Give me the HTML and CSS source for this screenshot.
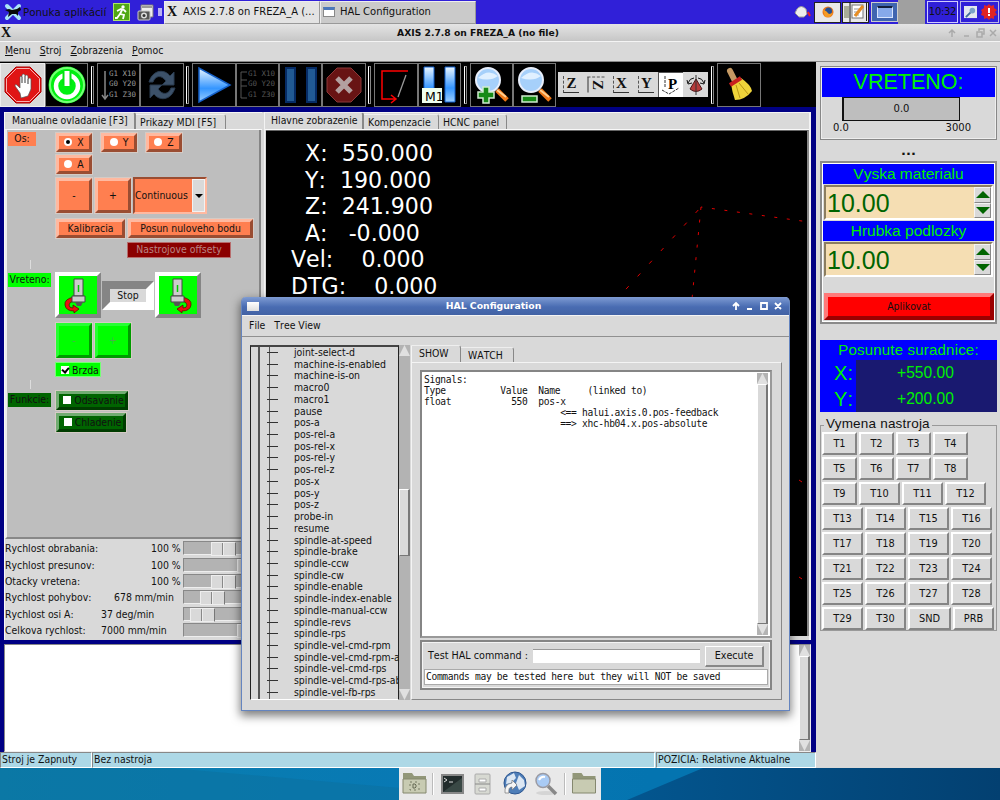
FILE: index.html
```html
<!DOCTYPE html>
<html lang="sk">
  <head>
    <meta charset="UTF-8" />
    <title>AXIS 2.7.8 on FREZA_A (no file)</title>
    <link rel="stylesheet" href="styles.css">
  </head>
  <body>
    <header class="taskbar">
      <svg class="mouse" width="18" height="18" viewBox="0 0 18 18">
        <path d="M3 3l12 12M15 3L3 15" stroke="#a9e4f7" stroke-width="4" stroke-linecap="round" />
        <path d="M1 7l4-1 3 1 5-1 3-2 1 3-3 2v4l-2-2H8l-4 3 1-5z" fill="#080808" />
      </svg>
      <span class="apps">Ponuka aplikácií</span>
      <svg class="exit" width="17" height="18" viewBox="0 0 17 18">
        <rect x=".5" y=".5" width="16" height="17" fill="#50a814" stroke="#aee46b" />
        <circle cx="10" cy="4" r="1.7" fill="#fff" />
        <path d="M4 8l4-2 3 1 2 2M9 7l-2 4 4 1-1 4M7 11l-3 4H2" stroke="#fff" stroke-width="1.8" fill="none" />
      </svg>
      <svg class="camera" width="17" height="17" viewBox="0 0 17 17">
        <path d="M4 1h12v12H4z" fill="#eee" stroke="#777" />
        <path d="M5 3h10" stroke="#999" stroke-width="2" />
        <rect x="1" y="7" width="12" height="9" rx="1" fill="#555" stroke="#ccc" />
        <circle cx="7" cy="11.500" r="3" fill="#ddd" /><circle cx="7" cy="11.500" r="1.500" fill="#333" />
      </svg>
      <i class="handle"></i>
      <div class="task active"><b class="xlogo">X</b><span>AXIS 2.7.8 on FREZA_A (...</span></div>
      <div class="task"><i class="win-icon"></i><span>HAL Configuration</span></div>
      <div class="tray">
        <svg width="17" height="14" viewBox="0 0 17 14">
          <path d="M1 8l2-4q4-5 9 0l1 5-3 3H5z" fill="#eee" stroke="#999" /><path d="M14 7l2 4" stroke="#e22" stroke-width="2" />
        </svg>
        <span class="pager fox">
          <svg width="12" height="12" viewBox="0 0 12 12"><circle cx="6" cy="6" r="5.500" fill="#e8761c" /><circle cx="6.500" cy="5" r="3.500" fill="#254f91" /><path d="M1 4l3 1 3 3 4-1-3 4H3z" fill="#f59a22" /></svg>
        </span>
        <span class="pager edit">
          <svg width="24" height="20" viewBox="0 0 24 20"><path d="M0 4h5v12H0z" fill="#a8ab98" /><path d="M6 0v20" stroke="#111" /><rect x="8" y="3" width="11" height="13" fill="#fff" stroke="#777" /><path d="M10 7h7M10 10h6M10 13h5" stroke="#999" /><path d="M11 14l8-10" stroke="#e88e23" stroke-width="3" /><path d="M22.500 1v18" stroke="#222" /></svg>
        </span>
        <span class="desk on"><i></i></span>
        <span class="desk"></span>
        <span class="clock">10:32</span>
        <span class="status-icons">
          <svg width="13" height="13" viewBox="0 0 14 14"><rect width="14" height="13" fill="#e3e8ef" /><path d="M2 12l7-7" stroke="#3f6c99" stroke-width="2" /><circle cx="9" cy="5" r="3" fill="#7aa2c8" /></svg>
          <svg width="16" height="16" viewBox="0 0 16 16"><path d="M8 0l2 2 3-1v3l3 2-2 2 2 3-3 1v3l-3-1-2 2-2-2-3 1v-3l-3-1 1-3-1-2 3-2V1l3 1z" fill="#e02424" /><path d="M8 4v5M8 10v2" stroke="#fff" stroke-width="2" /></svg>
        </span>
      </div>
    </header>

    <div class="titlebar">
      <b class="xlogo">X</b>
      <h1>AXIS 2.7.8 on FREZA_A (no file)</h1>
      <svg width="50" height="10" viewBox="0 0 50 10" fill="none" stroke="#aaa" stroke-width="1.500">
        <path d="M5 9V2M2 5l3-3 3 3M17 8h5M30 4h5v5h-5zM32 3V1h5v5h-2M43 2l6 6M49 2l-6 6" />
      </svg>
    </div>
    <nav class="menubar">
      <span><u>M</u>enu</span><span><u>S</u>troj</span><span><u>Z</u>obrazenia</span><span><u>P</u>omoc</span>
    </nav>

    <main>
      <section class="axis">
        <div class="toolbar">
          <span class="tool lit">
            <svg width="38" height="38" viewBox="0 0 38 38"><path d="M12 1h14l11 11v14L26 37H12L1 26V12z" fill="#e01515" stroke="#a00" /><path d="M12.500 2.500h13l10 10v13l-10 10h-13l-10-10v-13z" fill="none" stroke="#f9b0b0" /><path d="M16 27l-5-7q0-3 3 0l2 2V11q1-2 2 0v6-8q1-2 3 0v8-7q1-2 3 0v8-5q2-2 3 0v10l-3 7-7 2z" fill="#fff" stroke="#555" stroke-width=".7" /></svg>
          </span>
          <span class="tool">
            <svg width="38" height="38" viewBox="0 0 38 38"><circle cx="19" cy="19" r="18.500" fill="#00f010" /><circle cx="19" cy="19" r="17" fill="none" stroke="#7f7" stroke-width="2" /><circle cx="19" cy="20" r="11" fill="none" stroke="#fff" stroke-width="4.500" /><path d="M19 5v14" stroke="#00e010" stroke-width="9" /><path d="M19 5v15" stroke="#fff" stroke-width="5" /></svg>
          </span>
          <i class="sep"></i>
          <span class="tool">
            <svg width="36" height="34" viewBox="0 0 36 34" class="gcode"><path d="M4 3v28M1 27l3 4 3-4" stroke="#888" fill="none" stroke-width="1.500" /><text x="8" y="8">G1 X10</text><text x="8" y="18">G0 Y20</text><text x="8" y="29">G1 Z30</text></svg>
          </span>
          <span class="tool">
            <svg width="32" height="34" viewBox="0 0 32 34"><path d="M3 14C7 1 19 1 24 8l4-4v13H16l4-4C15 6 9 8 7 14z" fill="#3c5169" stroke="#2a3c50" /><path d="M29 20C25 33 13 33 8 26l-4 4V17h12l-4 4c5 7 11 5 13-1z" fill="#3c5169" stroke="#2a3c50" /></svg>
          </span>
          <i class="sep"></i>
          <span class="tool">
            <svg width="36" height="38" viewBox="0 0 36 38"><defs><linearGradient id="blue" x2="0" y2="1"><stop stop-color="#eaf6ff" /><stop offset=".6" stop-color="#3596ff" /><stop offset="1" stop-color="#9ccfff" /></linearGradient></defs><path d="M3 2v34l31-17z" fill="url(#blue)" stroke="#1560c8" stroke-width="1.500" /></svg>
          </span>
          <span class="tool">
            <svg width="36" height="34" viewBox="0 0 36 34" class="gcode dim"><path d="M8 4H2v26h6M2 12h6M2 18h6" stroke="#555" fill="none" /><text x="9" y="8">G1 X10</text><text x="9" y="18">G0 Y20</text><text x="9" y="29">G1 Z30</text></svg>
          </span>
          <span class="tool">
            <svg width="34" height="38" viewBox="0 0 34 38"><path d="M2 2h9v34H2zM23 2h9v34h-9z" fill="#215a94" stroke="#062c66" stroke-width="2" /></svg>
          </span>
          <span class="tool">
            <svg width="36" height="36" viewBox="0 0 36 36"><path d="M11 1h14l10 10v14L25 35H11L1 25V11z" fill="#681414" stroke="#8b3838" /><path d="M11 11l14 14M25 11L11 25" stroke="#b3a0a0" stroke-width="5" /></svg>
          </span>
          <i class="sep"></i>
          <span class="tool">
            <svg width="38" height="38" viewBox="0 0 38 38" fill="none"><path d="M31 5H5v28h14M14 29l5 4-5 4" stroke="red" stroke-width="1.500" /><path d="M29 9L21 31" stroke="#999" stroke-width="1.300" /></svg>
          </span>
          <span class="tool">
            <svg width="38" height="38" viewBox="0 0 38 38"><path d="M4 1h10v22H4zM25 1h10v35H25z" fill="url(#blue)" stroke="#1060d0" /><path d="M2 22h20v15H2z" fill="#efffef" /><text x="5" y="35" class="m1">M1</text></svg>
          </span>
          <i class="sep"></i>
          <span class="tool">
            <svg width="38" height="38" viewBox="0 0 38 38"><path d="M24 24l10 10" stroke="#f07818" stroke-width="5" /><path d="M24 24l9 7" stroke="#ffd090" stroke-width="2" /><circle cx="15" cy="14" r="12" fill="#a6d0fa" stroke="#e8eefa" stroke-width="2" /><path d="M5 12q10-10 20-2-8 6-20 2" fill="#e0f0ff" /><path d="M10 21h6v5h5v6h-5v5h-6v-5H5v-6h5z" fill="#168a16" stroke="#cfeccf" stroke-width="1.500" /></svg>
          </span>
          <span class="tool">
            <svg width="38" height="38" viewBox="0 0 38 38"><path d="M24 24l10 10" stroke="#f07818" stroke-width="5" /><path d="M24 24l9 7" stroke="#ffd090" stroke-width="2" /><circle cx="15" cy="14" r="12" fill="#a6d0fa" stroke="#e8eefa" stroke-width="2" /><path d="M5 12q10-10 20-2-8 6-20 2" fill="#e0f0ff" /><path d="M6 30h15v6H6z" fill="#168a16" stroke="#cfeccf" stroke-width="1.500" /></svg>
          </span>
          <div class="views">
            <span><b>Z</b></span><span><b class="turned">Z</b></span><span><b>X</b></span><span><b>Y</b></span>
            <span class="down"><svg width="20" height="20" viewBox="0 0 20 20"><path d="M4 1v12M1 15l7 4 10-6" stroke="#333" fill="none" stroke-dasharray="3 1" /><text x="7" y="14" class="persp">P</text></svg></span>
            <span class="spin-view"><svg width="20" height="20" viewBox="0 0 20 20"><path d="M10 4L4 14q6 5 12 0z" fill="#b63a3a" stroke="#501818" /><path d="M10 0v20" stroke="#333" /><path d="M2 8q2-5 6-5M18 8q-2-5-6-5M1 5l1 4 4-1M19 5l-1 4-4-1" stroke="#111" fill="none" /></svg></span>
          </div>
          <i class="sep"></i>
          <span class="tool broom">
            <svg width="36" height="36" viewBox="0 0 36 36"><path d="M9 4l5 10" stroke="#c69a64" stroke-width="6" stroke-linecap="round" /><path d="M10 17l10-6q10 7 11 13-7 9-17 9-3-9-4-16z" fill="#efd43a" /><path d="M15 18l4 13M18 16l9 11" stroke="#b89616" /><path d="M9 18l11-7" stroke="#c82020" stroke-width="4" /></svg>
          </span>
        </div>

        <div class="frame">
          <div class="panes">
            <div class="left-pane">
              <div class="tabs"><span class="tab open">Manualne ovladanie [F3]</span><span class="tab">Prikazy MDI [F5]</span></div>
              <div class="manual">
                <div class="group">
                  <span class="tag coral">Os:</span>
                  <div class="controls">
                    <div class="row axes">
                      <label class="bevel coral"><i class="radio on"></i>X</label>
                      <label class="bevel coral"><i class="radio"></i>Y</label>
                      <label class="bevel coral"><i class="radio"></i>Z</label>
                      <label class="bevel coral"><i class="radio"></i>A</label>
                    </div>
                    <div class="row jog">
                      <span class="bevel coral square">-</span>
                      <span class="bevel coral square">+</span>
                      <span class="combo"><span>Continuous</span><i></i></span>
                    </div>
                    <div class="row home">
                      <span class="bevel coral home-btn">Kalibracia</span>
                      <span class="bevel coral touch-btn">Posun nuloveho bodu</span>
                    </div>
                    <span class="offsets">Nastrojove offsety</span>
                  </div>
                </div>
                <i class="tick"></i>
                <div class="group spindle">
                  <span class="tag lime">Vreteno:</span>
                  <div class="controls">
                    <div class="row turn">
                      <span class="turn-btn">
                        <svg width="38" height="38" viewBox="0 0 38 38"><path d="M15 3h9v17h-9z" fill="#ccc" stroke="#444" /><path d="M19.500 9v7" stroke="#0c0" stroke-width="1.500" /><path d="M15 21q-10 2-9 8 1 6 9 6v2l5-4-6-4v3q-4 0-4-3t5-4z" fill="#e81010" stroke="#500" stroke-width=".7" /><path d="M13 20h13v6H13z" fill="#ccc" stroke="#444" /><path d="M16 26h8l-2 4h-4z" fill="#555" /></svg>
                      </span>
                      <span class="stop"><span>Stop</span></span>
                      <span class="turn-btn flip">
                        <svg width="38" height="38" viewBox="0 0 38 38"><path d="M15 3h9v17h-9z" fill="#ccc" stroke="#444" /><path d="M19.500 9v7" stroke="#0c0" stroke-width="1.500" /><path d="M15 21q-10 2-9 8 1 6 9 6v2l5-4-6-4v3q-4 0-4-3t5-4z" fill="#e81010" stroke="#500" stroke-width=".7" /><path d="M13 20h13v6H13z" fill="#ccc" stroke="#444" /><path d="M16 26h8l-2 4h-4z" fill="#555" /></svg>
                      </span>
                    </div>
                    <div class="row speed"><span class="bevel lime square">-</span><span class="bevel lime square">+</span></div>
                    <label class="brake"><i class="check on"></i>Brzda</label>
                  </div>
                </div>
                <i class="tick low"></i>
                <div class="group">
                  <span class="tag forest">Funkcie:</span>
                  <div class="controls coolant">
                    <label class="bevel forest"><i class="check"></i>Odsavanie</label>
                    <label class="bevel forest short"><i class="check"></i>Chladenie</label>
                  </div>
                </div>
              </div>
              <div class="sliders">
                <div><label>Rychlost obrabania:</label><span class="pct">100 %</span><i class="s1"></i></div>
                <div><label>Rychlost presunov:</label><span class="pct">100 %</span><i class="s2"></i></div>
                <div><label>Otacky vretena:</label><span class="pct">100 %</span><i class="s1"></i></div>
                <div><label>Rychlost pohybov:</label><span class="v4">678 mm/min</span><i class="s4"></i></div>
                <div><label>Rychlost osi A:</label><span class="v5">37 deg/min</span><i class="s5"></i></div>
                <div><label>Celkova rychlost:</label><span class="v6">7000 mm/min</span><i class="s2"></i></div>
              </div>
            </div>
            <div class="right-pane">
              <div class="tabs"><span class="tab open">Hlavne zobrazenie</span><span class="tab">Kompenzacie</span><span class="tab">HCNC panel</span></div>
              <div class="preview">
                <pre class="dro"><span class="d1">X:  550.000</span>
<span class="d1">Y:  190.000</span>
<span class="d1">Z:  241.900</span>
<span class="d1">A:   -0.000</span>
<span class="d2">Vel:    0.000</span>
<span class="d2">DTG:    0.000</span></pre>
                <svg class="limits" width="190" height="500" viewBox="0 0 190 500">
                  <path d="M82 76L-2 168" stroke-dasharray="4 13.2" stroke-dashoffset="-4" />
                  <path d="M82 76l-9 92" stroke-dasharray="3 9.600" />
                  <path d="M82 76l108 15" stroke-dasharray="3 9.600" stroke-dashoffset="-11" />
                  <path d="M180 349l3 2M180 446l3 2" />
                </svg>
              </div>
            </div>
          </div>
          <div class="gcode-text"><div class="scroll"><i class="up"></i><i class="bar"></i><i class="dn"></i></div></div>
        </div>
        <footer class="statusbar"><span>Stroj je Zapnuty</span><span>Bez nastroja</span><span>POZICIA: Relativne Aktualne</span></footer>
      </section>

      <aside class="panel">
        <div class="spindle-box">
          <h2>VRETENO:</h2>
          <div class="meter">0.0</div>
          <div class="range"><span>0.0</span><span>3000</span></div>
        </div>
        <div class="dots">...</div>
        <div class="material">
          <h3>Vyska materialu</h3>
          <div class="spinbox"><span>10.00</span><i class="inc"></i><i class="dec"></i></div>
          <h3>Hrubka podlozky</h3>
          <div class="spinbox"><span>10.00</span><i class="inc"></i><i class="dec"></i></div>
          <div class="apply">Aplikovat</div>
        </div>
        <div class="coords">
          <h3>Posunute suradnice:</h3>
          <div><b>X:</b><span>+550.00</span></div>
          <div><b>Y:</b><span>+200.00</span></div>
        </div>
        <fieldset class="tools">
          <legend>Vymena nastroja</legend>
          <div class="narrow"><span>T1</span><span>T2</span><span>T3</span><span>T4</span></div>
          <div class="narrow"><span>T5</span><span>T6</span><span>T7</span><span>T8</span></div>
          <div class="mixed"><span>T9</span><span>T10</span><span>T11</span><span>T12</span></div>
          <div><span>T13</span><span>T14</span><span>T15</span><span>T16</span></div>
          <div><span>T17</span><span>T18</span><span>T19</span><span>T20</span></div>
          <div><span>T21</span><span>T22</span><span>T23</span><span>T24</span></div>
          <div><span>T25</span><span>T26</span><span>T27</span><span>T28</span></div>
          <div class="last"><span>T29</span><span>T30</span><span>SND</span><span>PRB</span></div>
        </fieldset>
      </aside>
    </main>

    <section class="hal">
      <div class="hal-title">
        <i></i><h2>HAL Configuration</h2>
        <svg width="50" height="10" viewBox="0 0 50 10" fill="none" stroke="#fff" stroke-width="1.800">
          <path d="M4 9V2M1 5l3-3 3 3M15 8h5M29 2h6v6h-6zM43 2l6 6M49 2l-6 6" />
        </svg>
      </div>
      <nav><span>File</span><span>Tree View</span></nav>
      <div class="hal-body">
        <ul class="tree">
          <li>joint-select-d</li>
          <li>machine-is-enabled</li>
          <li>machine-is-on</li>
          <li>macro0</li>
          <li>macro1</li>
          <li>pause</li>
          <li>pos-a</li>
          <li>pos-rel-a</li>
          <li>pos-rel-x</li>
          <li>pos-rel-y</li>
          <li>pos-rel-z</li>
          <li>pos-x</li>
          <li>pos-y</li>
          <li>pos-z</li>
          <li>probe-in</li>
          <li>resume</li>
          <li>spindle-at-speed</li>
          <li>spindle-brake</li>
          <li>spindle-ccw</li>
          <li>spindle-cw</li>
          <li>spindle-enable</li>
          <li>spindle-index-enable</li>
          <li>spindle-manual-ccw</li>
          <li>spindle-revs</li>
          <li>spindle-rps</li>
          <li>spindle-vel-cmd-rpm</li>
          <li>spindle-vel-cmd-rpm-a</li>
          <li>spindle-vel-cmd-rps</li>
          <li>spindle-vel-cmd-rps-ab</li>
          <li>spindle-vel-fb-rps</li>
        </ul>
        <div class="scroll tree-scroll"><i class="up"></i><i class="bar"></i><i class="dn"></i></div>
        <div class="hal-main">
          <div class="hal-tabs"><span class="open">SHOW</span><span>WATCH</span></div>
          <div class="hal-page">
            <div class="show">
              <pre>Signals:
Type          Value  Name     (linked to)
float           550  pos-x
                         &lt;== halui.axis.0.pos-feedback
                         ==&gt; xhc-hb04.x.pos-absolute</pre>
              <div class="scroll"><i class="up"></i><i class="bar"></i><i class="dn"></i></div>
            </div>
            <div class="test">
              <div class="cmd"><label>Test HAL command :</label><i></i><span>Execute</span></div>
              <div class="note">Commands may be tested here but they will NOT be saved</div>
            </div>
          </div>
        </div>
      </div>
    </section>

    <div class="desktop">
      <svg class="wallpaper" width="1000" height="32" viewBox="0 0 1000 32">
        <defs><linearGradient id="sea"><stop stop-color="#0a80ad" /><stop offset=".4" stop-color="#0879b4" /><stop offset=".65" stop-color="#0474b0" /></linearGradient><linearGradient id="deep"><stop stop-color="#03568f" /><stop offset="1" stop-color="#034071" /></linearGradient></defs>
        <path d="M0 0h1000v32H0z" fill="url(#sea)" /><path d="M0 0h170L400 20V32H0z" fill="#0b6f9d" opacity=".5" /><path d="M703 0h297v32H627z" fill="url(#deep)" />
      </svg>
      <div class="dock">
        <svg width="25" height="24" viewBox="0 0 25 24"><path d="M1 1h9l2 3h12v17H1z" fill="#929779" /><path d="M1 7h23v14H1z" fill="#c8cbb2" stroke="#85886f" /><path d="M8 10h9v8H8z" stroke="#777b63" stroke-dasharray="2 3" fill="none" /><path d="M11 12h2l1 1v2l-1 1h-2z" stroke="#666a55" fill="none" /></svg>
        <i></i>
        <svg width="25" height="24" viewBox="0 0 25 24"><path d="M2 3h21v18H2z" fill="#222c2c" stroke="#888" stroke-width="2" /><path d="M4 6l3 2-3 2M9 10h4" stroke="#ddd" fill="none" /><path d="M3 20L22 6v14z" fill="#4a5b56" opacity=".6" /></svg>
        <svg width="25" height="24" viewBox="0 0 25 24"><rect x="5" y="2" width="15" height="20" rx="1" fill="#d7d9d2" stroke="#aaa" /><path d="M5 12h15" stroke="#888" /><path d="M9 7h7v3H9zM9 16h7v3H9z" fill="#fff" stroke="#aaa" /></svg>
        <svg width="27" height="26" viewBox="0 0 27 26"><circle cx="14" cy="12" r="11" fill="#4e7eb8" stroke="#2c5590" /><path d="M6 6l7-4 2 5-5 5-5 1zM18 4l5 5 1 6-6 4-3-7z" fill="#dce7f3" /><path d="M4 22q-1-9 7-10V9l5 5-5 5v-3q-4 0-3 6z" fill="#f5f5f5" stroke="#777" stroke-width=".7" /></svg>
        <svg width="25" height="24" viewBox="0 0 25 24"><ellipse cx="13" cy="21" rx="10" ry="2" fill="#d5d5d5" /><path d="M15 14l8 8" stroke="#888" stroke-width="3.500" /><circle cx="10" cy="8.500" r="7" fill="#a9cbf5" stroke="#9b9ba3" stroke-width="1.500" /><path d="M6 8q2-4 6-3" stroke="#fff" fill="none" stroke-width="2" /></svg>
        <i></i>
        <svg width="26" height="24" viewBox="0 0 25 24"><path d="M1 1h9l2 3h12v17H1z" fill="#929779" /><path d="M1 7h23v14H1z" fill="#c8cbb2" stroke="#85886f" /></svg>
      </div>
    </div>
  </body>
</html>
```
FILE: styles.css
```css
* {
  margin: 0;
  padding: 0;
  box-sizing: border-box;
}

body {
  width: 1000px;
  height: 800px;
  position: relative;
  overflow: hidden;
  background: #d9d9d9;
  color: #111;
  font-family: "DejaVu Sans Condensed", "DejaVu Sans", sans-serif;
  font-stretch: condensed;
  font-size: 10.4px;
  font-kerning: none;
  line-height: 12px;
  white-space: nowrap;
}

h1, h2, h3 {
  font-weight: normal;
}

i {
  display: block;
}

svg {
  display: block;
  flex: none;
}

/* top panel */

.taskbar {
  height: 24px;
  background: #3020d8;
  display: flex;
  align-items: center;
  font-family: "DejaVu Sans", sans-serif;
  font-stretch: normal;
  font-size: 10px;
}

.mouse {
  margin-left: 4px;
}

.apps {
  width: 92px;
  padding-left: 1px;
  font-size: 10.3px;
}

.camera {
  margin-left: 7px;
}

.handle {
  width: 4px;
  height: 8px;
  margin: 0 1px 0 4px;
  background: #b9b2f3;
}

.exit {
  margin-left: -1px;
}

.task {
  width: 156px;
  height: 23px;
  background: #cacaca;
  border: 1px solid #999;
  border-top-color: #eee;
  border-left-color: #eee;
  display: flex;
  align-items: center;
  padding: 0 2px;
  gap: 5px;
}

.task.active {
  background: #e3e3e3;
  margin-left: 1px;
}

.xlogo {
  font: bold 14px/12px "Liberation Serif", serif;
}

.task .xlogo {
  width: 11px;
}

.win-icon {
  width: 12px;
  height: 10px;
  background: #fff;
  border: 1px solid #888;
  border-top: 3px solid #4a77bc;
}

.tray {
  margin-left: auto;
  display: flex;
  align-items: center;
}

.pager {
  width: 27px;
  height: 21px;
  margin-left: 3px;
  background: #e8e8e8;
  border: 1px solid #222;
  display: grid;
  place-content: center;
}

.pager.edit {
  margin-left: 1px;
}

.desk {
  width: 27px;
  height: 24px;
  background: #a0a0a0;
  display: grid;
  place-content: center;
}

.desk.on {
  margin-left: 2px;
  height: 20px;
  background: #3f65b0;
  border: 1px solid #ccc;
}

.desk.on i {
  width: 16px;
  height: 12px;
  background: #86a9ea;
  border: 1px solid #d7e4ff;
  border-top: 2px solid #14213d;
}

.clock {
  width: 31px;
  height: 22px;
  margin: 0 2px;
  border: 1px solid #d0ccff;
  line-height: 20px;
  text-align: center;
  letter-spacing: -0.3px;
}

.status-icons {
  width: 39px;
  height: 22px;
  margin-right: 1px;
  border: 1px solid #b9b4e8;
  display: flex;
  align-items: center;
  gap: 4px;
  padding-left: 3px;
}

.titlebar {
  height: 17px;
  background: linear-gradient(#e4e4e4, #c6c6c6);
  display: flex;
  align-items: center;
  justify-content: space-between;
  padding-right: 3px;
}

.titlebar .xlogo {
  width: 50px;
  padding-left: 1px;
}

.titlebar h1 {
  font: bold 9.2px/18px "DejaVu Sans", sans-serif;
  font-kerning: none;
  padding-right: 41px;
}

.menubar {
  height: 21px;
  border-top: 1px solid #f4f4f4;
  border-bottom: 1px solid #888;
  display: flex;
  gap: 9px;
  padding: 2px 5px;
}

/* axis */

main {
  height: 706px;
  display: flex;
}

.axis {
  width: 816px;
}

.toolbar {
  height: 45px;
  background: #000;
  display: flex;
  align-items: center;
}

.tool {
  width: 43.3px;
  height: 44px;
  border: 1px solid #777;
  display: grid;
  place-content: center;
  flex: none;
}

.tool.lit {
  width: 45px;
  background: #d9d9d9;
  border-color: #eee;
}

.sep {
  width: 3px;
  height: 38px;
  margin: 0 3px 0 2.8px;
  border: 1px solid #888;
  border-left-color: #fff;
  flex: none;
}

.gcode text {
  font: 7.5px "DejaVu Sans Mono", monospace;
  fill: #9a9a9a;
}

.gcode.dim text {
  fill: #555;
}

.m1 {
  font: 12.5px "DejaVu Sans", sans-serif;
}

.views {
  width: 150px;
  height: 25px;
  margin-left: 2px;
  background: #d9d9d9;
  display: flex;
}

.views span {
  width: 25px;
  display: grid;
  place-content: center;
}

.views b {
  width: 16px;
  height: 17px;
  border-left: 1px dashed #555;
  border-bottom: 1px solid #333;
  font: bold 15px/15px "Liberation Serif", serif;
  text-align: center;
}

.views .turned {
  transform: rotate(90deg);
}

.views .down {
  background: #fff;
  border-left: 1px solid #555;
  border-top: 1px solid #555;
}

.persp {
  font: bold 15px "Liberation Serif", serif;
}

/* notebook area */

.frame {
  height: 645px;
  background: #000084;
  border: 4px solid #000084;
  border-top-width: 5px;
  border-right-width: 5px;
}

.panes {
  height: 528px;
  display: flex;
  background: #d9d9d9;
  border-left: 1px solid #f7f7f7;
}

.left-pane {
  width: 257px;
}

.tabs {
  height: 18px;
  display: flex;
  align-items: flex-end;
  border-top: 1px solid #f3f3f3;
  border-bottom: 1px solid #f8f8f8;
}

.tab {
  height: 15px;
  padding: 2px 4px 0;
  border-right: 1px solid #888;
  border-top: 1px solid #eee;
  border-radius: 0 3px 0 0;
  line-height: 11px;
}

.left-pane .tab.open {
  width: 131px;
  height: 17px;
  padding: 2px 0 0 7px;
  border-right-width: 2px;
}

.left-pane .tab:last-child {
  width: 90px;
}

.manual {
  height: 409px;
  background: #bebebe;
  border-right: 2px solid #858585;
  border-left: 2px solid #eee;
  border-bottom: 2px solid #888;
  margin-right: 1px;
  padding: 2px 0 0 1px;
}

.group {
  display: flex;
}

.tag {
  width: 43px;
  height: 14px;
  text-align: center;
  line-height: 13px;
  margin-right: 4px;
  flex: none;
}

.coral {
  background: #ff7f50;
  --light: #ffb9a0;
  --dark: #9a4d32;
}

.tag.coral {
  width: 28px;
  margin: 0 19px 0 0;
}

.lime {
  background: #00ff00;
  --light: #26ff32;
  --dark: #009b00;
}

.tag.lime {
  margin-top: 1px;
}

.forest {
  background: #006400;
  --light: #72ac72;
  --dark: #003c00;
}

.tag.forest {
  margin-top: 1px;
}

.bevel {
  border: 4px solid;
  border-color: var(--light) var(--dark) var(--dark) var(--light);
  outline: 1px solid #d5cbc5;
  outline-offset: -1px;
  display: flex;
  align-items: center;
  justify-content: center;
  padding-bottom: 1px;
  flex: none;
}

.row {
  display: flex;
}

.axes {
  width: 150px;
  flex-wrap: wrap;
  gap: 1px 7px;
}

.axes .bevel {
  width: 38px;
  height: 21px;
  gap: 5px;
}

.radio {
  width: 8px;
  height: 8px;
  border-radius: 50%;
  background: #fff;
}

.radio.on {
  border: 2.5px solid #fff;
  background: #000;
}

.jog {
  margin-top: 2px;
  gap: 1px;
}

.square {
  width: 38px;
  height: 37px;
}

.combo {
  width: 74px;
  height: 37px;
  background: #ff7f50;
  border: 2px solid;
  border-color: #9a4d32 #ffb9a0 #ffb9a0 #9a4d32;
  display: flex;
  align-items: center;
}

.combo span {
  width: 57px;
  padding-bottom: 1px;
}

.combo i {
  width: 13px;
  height: 33px;
  background: #d9d9d9;
  border: 1px solid #f2f2f2;
  display: grid;
  place-content: center;
}

.combo i::after {
  content: "";
  border: 4px solid transparent;
  border-top-color: #000;
  border-bottom: 0;
}

.home {
  margin-top: 4px;
  gap: 1px;
}

.home .bevel {
  height: 21px;
}

.home-btn {
  width: 71px;
}

.touch-btn {
  width: 127px;
}

.offsets {
  display: block;
  width: 104px;
  height: 16px;
  margin: 3px 0 0 72px;
  background: #8b0000;
  border: 1px solid #b76c6c;
  color: #b98585;
  line-height: 13px;
  text-align: center;
}

.tick {
  width: 1px;
  height: 9px;
  margin: 2px 0 3px 22px;
  background: #ddd;
}

.tick.low {
  height: 9px;
  margin: 3px 0 3px 22px;
}

.turn {
  align-items: center;
}

.turn-btn {
  width: 46px;
  height: 46px;
  background: #00ff00;
  border: 4px solid;
  border-color: #fff #858585 #858585 #fff;
  display: grid;
  place-content: center;
}

.flip svg {
  transform: scaleX(-1);
}

.stop {
  width: 52px;
  height: 29px;
  margin: 0 1px;
  border: 8px solid;
  border-color: #858585 #fff #fff #858585;
  background: #d9d9d9;
  line-height: 13px;
  text-align: center;
}

.speed {
  margin-top: 4px;
  gap: 1px;
  color: #48b048;
}

.brake {
  width: 46px;
  height: 15px;
  margin-top: 3px;
  padding-left: 5px;
  background: #00ff00;
  border: 1px solid #75ff75;
  display: flex;
  align-items: center;
  gap: 3px;
}

.check {
  width: 8px;
  height: 8px;
  background: #fff;
  line-height: 8px;
}

.check.on::after {
  content: "";
  display: block;
  width: 3px;
  height: 5px;
  margin: 0 2px;
  border: solid #000;
  border-width: 0 2px 2px 0;
  transform: rotate(40deg);
}

.coolant .bevel {
  width: 74px;
  height: 21px;
  gap: 3px;
  margin: -2px 0 3px;
  padding-left: 3px;
}

.coolant .short {
  width: 72px;
}

.sliders {
  height: 100px;
  padding-top: 1px;
}

.sliders div {
  height: 16.4px;
  display: flex;
  align-items: center;
}

.sliders label {
  width: 96px;
}

.sliders span {
  width: 82px;
}

.sliders .pct {
  padding-left: 50px;
}

.sliders .v4 {
  padding-left: 13px;
}

.sliders .v6 {
  padding-left: 0;
}

.sliders i {
  width: 78px;
  height: 14px;
  background: #b3b3b3;
  border: 1px solid #888;
  border-bottom-color: #eee;
}

.sliders i::after {
  content: "";
  display: block;
  width: 23px;
  height: 12px;
  margin-left: 27px;
  background: linear-gradient(90deg, #d9d9d9 10px, #888 10px, #888 11px, #fff 11px, #d9d9d9 12px);
  border: 1px solid #eee;
  border-right-color: #777;
}

.sliders .s2::after {
  margin-left: 53px;
}

.sliders .s4::after {
  margin-left: 16px;
}

.sliders .s5::after {
  margin-left: 6px;
}

.right-pane {
  flex: 1;
  margin-left: 2px;
  border-left: 1px solid #f3f3f3;
  border-right: 2px solid #f3f3f3;
}

.right-pane .tab.open {
  width: 99px;
  height: 17px;
  padding: 2px 0 0 6px;
  border-right-width: 2px;
}

.right-pane .tab:nth-child(2) {
  width: 75px;
}

.right-pane .tab:last-child {
  width: 68px;
}

.preview {
  position: relative;
  height: 506px;
  background: #000;
  border-top: 1px solid #666;
  border-right: 2px solid #888;
  margin-left: 1px;
}

.dro {
  font: 22.1px/26.5px "DejaVu Sans", sans-serif;
  font-kerning: none;
  color: #fff;
  padding: 9px 0 0 25px;
}

.d1 {
  padding-left: 14px;
}

.limits {
  position: absolute;
  left: 353px;
  top: 0;
  stroke: #e00000;
  fill: none;
}

.gcode-text {
  height: 108px;
  margin-top: 4px;
  background: #fff;
  border: 1px solid #888;
  border-right-color: #eee;
  border-bottom-color: #eee;
  display: flex;
  justify-content: flex-end;
}

.scroll {
  width: 11px;
  background: #b3b3b3;
  display: flex;
  flex-direction: column;
  flex: none;
}

.scroll .bar {
  flex: 1;
  background: #d9d9d9;
  border: 1px solid #fff;
  border-right: 2px solid #777;
  border-bottom-color: #777;
}

.up, .dn {
  width: 11px;
  height: 11px;
  background: #e0e0e0;
  clip-path: polygon(50% 0, 100% 100%, 0 100%);
}

.dn {
  clip-path: polygon(0 0, 100% 0, 50% 100%);
}

.statusbar {
  height: 16px;
  background: #add8e6;
  display: flex;
}

.statusbar span {
  border: 1px solid #888;
  border-right-color: #fff;
  border-bottom-color: #fff;
  padding-left: 1px;
  line-height: 13px;
  width: 92px;
}

.statusbar span:nth-child(2) {
  width: 563px;
  margin-right: 1px;
}

.statusbar span:last-child {
  width: 160px;
}

/* side panel */

.panel {
  width: 184px;
  padding: 4px 3px 0 4px;
  background: #d9d9d9;
}

.panel h2, .panel h3, .coords b {
  background: #0000ff;
  color: #00f000;
  font-family: "Liberation Sans", sans-serif;
  font-stretch: normal;
  font-weight: normal;
  text-align: center;
}

.spindle-box {
  height: 74px;
  border: 1px solid #888;
  outline: 1px solid #eee;
  outline-offset: -2px;
  font-family: "DejaVu Sans", sans-serif;
  font-stretch: normal;
  font-size: 10px;
}

.panel h2 {
  font-size: 21.5px;
  line-height: 30px;
}

.meter {
  width: 118px;
  height: 24px;
  margin-left: 21px;
  background: #bebebe;
  border: 1px solid #111;
  border-left-width: 2px;
  text-align: center;
  line-height: 21px;
}

.range {
  display: flex;
  justify-content: space-between;
  padding: 1px 25px 0 12px;
}

.dots {
  height: 21px;
  text-align: center;
  font: bold 13px/21px "DejaVu Sans", sans-serif;
}

.material {
  height: 163px;
  border: 2px solid #8b8b8b;
  outline: 1px solid #fff;
  outline-offset: -3px;
  padding: 1px 1px 0 1px;
}

.panel h3 {
  font-size: 15.5px;
  line-height: 20px;
  height: 20px;
}

.spinbox {
  height: 35px;
  margin: 1px 1px;
  background: #f5deb3;
  border: 2px solid;
  border-color: #8b7d60 #fff #fff #8b7d60;
  display: grid;
  grid-template-columns: 1fr 17px;
  color: #006400;
  font: 25px/33px "Liberation Sans", sans-serif;
}

.spinbox span {
  grid-row: span 2;
  height: 31px;
  padding-left: 1px;
}

.spinbox i {
  background: #d9d9d9;
  border: 1px solid #f4f4f4;
  border-right-color: #888;
  border-bottom-color: #888;
  display: grid;
  place-content: center;
}

.spinbox i::after {
  content: "";
  border: 7px solid transparent;
}

.spinbox .inc::after {
  border-bottom-color: #006400;
  border-top: 0;
}

.spinbox .dec::after {
  border-top-color: #006400;
  border-bottom: 0;
}

.apply {
  height: 27px;
  margin: 16px 0 0 1px;
  background: #ff0000;
  border: 4px solid;
  border-color: #ff7979 #9b0000 #9b0000 #ff7979;
  text-align: center;
  line-height: 19px;
}

.coords {
  height: 72px;
  margin: 16px 0 8px;
  background: #191970;
}

.coords h3 {
  font-size: 15px;
  letter-spacing: 0.2px;
}

.coords div {
  display: flex;
  height: 26px;
  line-height: 26px;
}

.coords b {
  width: 36px;
  padding-left: 11px;
  font-size: 20px;
}

.coords span {
  flex: 1;
  text-align: center;
  color: #00f000;
  font-family: "Liberation Sans", sans-serif;
  font-stretch: normal;
  font-size: 15.6px;
  padding-right: 2px;
}

.tools {
  height: 211px;
  border: 1px solid #999;
  padding: 2px 0 0 1px;
  font-family: "DejaVu Sans", sans-serif;
  font-stretch: normal;
  font-size: 9.8px;
}

.tools legend {
  height: 10px;
  margin-left: 2px;
  padding: 0 2px;
  font: 13.5px/8px "Liberation Sans", sans-serif;
  letter-spacing: 0.2px;
}

.tools div {
  display: flex;
  gap: 2px;
  height: 25px;
}

.tools span {
  width: 41px;
  height: 23px;
  border: 2px solid;
  border-color: #fff #858585 #858585 #fff;
  text-align: center;
  line-height: 19px;
}

.tools .narrow span, .tools .mixed span:first-child {
  width: 35px;
}

.tools .last span:nth-child(3) {
  width: 43px;
}

/* hal window */

.hal {
  position: absolute;
  left: 241px;
  top: 297px;
  width: 549px;
  height: 414px;
  background: #d9d9d9;
  border: 1px solid #6484bf;
  border-top: 0;
  border-radius: 5px 5px 0 0;
  box-shadow: 0 4px 10px 1px rgba(0, 0, 0, 0.5);
}

.hal-title {
  height: 18px;
  background: linear-gradient(#7e9bd3, #496cb2 55%, #4262a4);
  border-radius: 4px 4px 0 0;
  display: flex;
  align-items: center;
  justify-content: space-between;
  padding: 0 7px 0 5px;
}

.hal-title i {
  width: 12px;
  height: 9px;
  background: linear-gradient(#fff, #dedede);
}

.hal-title h2 {
  color: #fff;
  font: bold 9.3px/18px "DejaVu Sans", sans-serif;
  font-kerning: none;
  padding-right: 4px;
}

.hal nav {
  height: 22px;
  padding: 3px 7px 0;
  border-top: 1px solid #f4f4f4;
  border-bottom: 1px solid #909090;
  display: flex;
  gap: 9px;
}

.hal-body {
  display: flex;
  padding: 8px 7px 0 8px;
}

.tree {
  position: relative;
  width: 149px;
  height: 355px;
  list-style: none;
  overflow: hidden;
  border: 1px solid #222;
  border-top: 2px solid #444;
  border-bottom-color: #fff;
}

.tree::before {
  content: "";
  position: absolute;
  inset: 0 auto 0 7px;
  width: 9px;
  border: solid #555;
  border-width: 0 1px 0 2px;
}

.tree li {
  height: 11.72px;
  line-height: 10.4px;
  padding-left: 43px;
  position: relative;
}

.tree li::before {
  content: "";
  position: absolute;
  left: 16px;
  top: 5px;
  width: 11px;
  height: 1px;
  background: #333;
}

.tree-scroll {
  height: 355px;
}

.tree-scroll .bar {
  flex: none;
  height: 67px;
  margin: 133px 0 auto;
}

.hal-main {
  flex: 1;
  margin-left: 1px;
}

.hal-tabs {
  height: 17px;
  display: flex;
  align-items: flex-end;
}

.hal-tabs span {
  width: 53px;
  height: 15px;
  padding: 1px 0 0 7px;
  border-top: 1px solid #eee;
  border-right: 1px solid #888;
  border-radius: 0 3px 0 0;
}

.hal-tabs .open {
  width: 50px;
  height: 17px;
  padding: 1px 0 0 7px;
  border-left: 1px solid #f4f4f4;
}

.hal-page {
  height: 338px;
  padding: 7px 9px 0 8px;
  border: 1px solid #f4f4f4;
  border-right-color: #888;
  border-bottom-color: #888;
}

.show {
  height: 268px;
  background: #fff;
  border: 2px solid;
  border-color: #858585 #999 #999 #858585;
  display: flex;
  justify-content: space-between;
  padding-right: 2px;
}

.show pre, .note {
  font: 9.6px/11px "DejaVu Sans Mono", monospace;
  letter-spacing: -0.33px;
  padding: 2px;
}

.show .scroll {
  margin: 1px 0;
}

.test {
  height: 50px;
  margin-top: 2px;
  border: 2px solid #858585;
  outline: 1px solid #f4f4f4;
  outline-offset: -3px;
  padding: 3px 2px;
}

.cmd {
  display: flex;
  align-items: center;
  height: 22px;
  padding-left: 4px;
  font-family: "DejaVu Sans", sans-serif;
  font-stretch: normal;
  font-size: 9.6px;
}

.cmd label {
  width: 105px;
}

.cmd i {
  width: 167px;
  height: 14px;
  background: #fff;
  border-top: 1px solid #999;
}

.cmd span {
  width: 59px;
  height: 21px;
  margin-left: 5px;
  border: 1px solid #fff;
  border-right: 2px solid #888;
  border-bottom: 2px solid #888;
  text-align: center;
  line-height: 18px;
}

.note {
  height: 16px;
  margin-top: 2px;
  background: #fff;
  border: 1px solid #aaa;
  padding: 1px;
}

/* desktop */

.desktop {
  position: relative;
  height: 32px;
  display: flex;
  justify-content: center;
}

.wallpaper {
  position: absolute;
  left: 0;
  top: 0;
}

.dock {
  position: relative;
  width: 202px;
  background: #e9e9e9;
  display: flex;
  align-items: center;
  justify-content: space-between;
  padding: 0 4px 0 3px;
}

.dock i {
  width: 2px;
  height: 22px;
  background: #bbb;
  border-right: 1px solid #fff;
}
```
